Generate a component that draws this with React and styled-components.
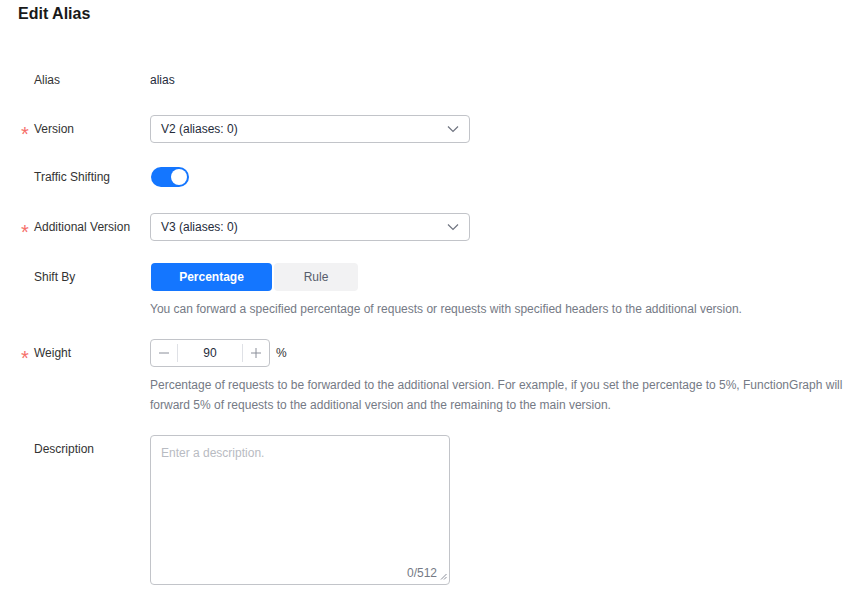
import React from "react";
import styled, { createGlobalStyle } from "styled-components";

const GlobalStyle = createGlobalStyle`
  html, body {
    margin: 0;
    padding: 0;
    background: #ffffff;
  }
  body {
    font-family: "Liberation Sans", Arial, sans-serif;
    font-size: 12px;
    color: #252b3a;
  }
`;

const Page = styled.div`
  padding: 2px 0 0 18px;
  width: 853px;
  box-sizing: border-box;
`;

const Title = styled.h1`
  margin: 0 0 40px 0;
  font-size: 16px;
  line-height: 24px;
  font-weight: 700;
  color: #191919;
`;

const Form = styled.div`
  display: flex;
  flex-direction: column;
`;

const Row = styled.div`
  display: flex;
  align-items: flex-start;
  margin-bottom: ${(p) => p.$gap ?? 20}px;
`;

const LabelCell = styled.div`
  width: 132px;
  flex-shrink: 0;
  display: flex;
  align-items: center;
  height: 28px;
  color: #333333;
  font-size: 12px;
`;

const StarSlot = styled.span`
  width: 16px;
  flex-shrink: 0;
  display: flex;
  align-items: center;
  padding-left: 3px;
  box-sizing: border-box;
`;

const Star = styled.span`
  color: #f66f6a;
  font-size: 20px;
  line-height: 1;
  transform: translateY(5px);
`;

const Control = styled.div`
  flex: 1;
  min-width: 0;
  display: flex;
  flex-direction: column;
`;

const Inline = styled.div`
  display: flex;
  align-items: center;
  height: ${(p) => p.$h ?? 28}px;
  gap: ${(p) => p.$gap ?? 0}px;
`;

const PlainValue = styled.span`
  line-height: 28px;
  color: #252b3a;
`;

const Select = styled.div`
  width: 320px;
  height: 28px;
  box-sizing: border-box;
  border: 1px solid #c2c4c9;
  border-radius: 4px;
  display: flex;
  align-items: center;
  justify-content: space-between;
  padding: 0 10px 0 10px;
  color: #252b3a;
  background: #fff;
`;

const Switch = styled.div`
  width: 38px;
  height: 20px;
  margin-left: 1px;
  border-radius: 10px;
  background: #1476ff;
  display: flex;
  align-items: center;
  justify-content: flex-end;
  padding: 0 2px;
  box-sizing: border-box;
`;

const Knob = styled.span`
  width: 16px;
  height: 16px;
  border-radius: 50%;
  background: #ffffff;
`;

const Segments = styled.div`
  display: flex;
  gap: 2px;
  margin-left: 1px;
`;

const Segment = styled.div`
  height: 28px;
  width: ${(p) => p.$w}px;
  border-radius: 4px;
  display: flex;
  align-items: center;
  justify-content: center;
  font-size: 12px;
  font-weight: ${(p) => (p.$active ? 700 : 400)};
  background: ${(p) => (p.$active ? "#1476ff" : "#f2f2f3")};
  color: ${(p) => (p.$active ? "#ffffff" : "#575d6c")};
`;

const Hint = styled.div`
  margin-top: ${(p) => p.$top ?? 7}px;
  max-width: 700px;
  line-height: 20px;
  font-size: 12px;
  color: #757a85;
`;

const Stepper = styled.div`
  width: 120px;
  height: 28px;
  box-sizing: border-box;
  border: 1px solid #c2c4c9;
  border-radius: 4px;
  display: flex;
  align-items: stretch;
`;

const StepButton = styled.div`
  width: 26px;
  display: flex;
  align-items: center;
  justify-content: center;
  color: #8a8e99;
`;

const StepDivider = styled.span`
  width: 1px;
  align-self: center;
  height: 18px;
  background: #dfe1e6;
`;

const StepValue = styled.div`
  flex: 1;
  display: flex;
  align-items: center;
  justify-content: center;
  color: #252b3a;
`;

const Unit = styled.span`
  color: #333333;
  margin-left: 6px;
  font-size: 12px;
`;

const TextArea = styled.div`
  width: 300px;
  height: 150px;
  box-sizing: border-box;
  border: 1px solid #c2c4c9;
  border-radius: 4px;
  padding: 8px 10px;
  display: flex;
  flex-direction: column;
  justify-content: space-between;
`;

const Placeholder = styled.span`
  color: #b8bbc2;
  line-height: 18px;
`;

const Counter = styled.div`
  display: flex;
  justify-content: flex-end;
  align-items: flex-end;
  gap: 3px;
  color: #757a85;
  line-height: 14px;
  margin-right: -8px;
  margin-bottom: -4px;
`;

const Chevron = () => (
  <svg width="12" height="8" viewBox="0 0 12 8" fill="none">
    <path d="M1 1.5L6 6.5L11 1.5" stroke="#6f7480" strokeWidth="1.2" />
  </svg>
);

const Minus = () => (
  <svg width="10" height="10" viewBox="0 0 10 10">
    <path d="M0 5H10" stroke="#8a8e99" strokeWidth="1" />
  </svg>
);

const Plus = () => (
  <svg width="10" height="10" viewBox="0 0 10 10">
    <path d="M0 5H10M5 0V10" stroke="#8a8e99" strokeWidth="1" />
  </svg>
);

const Grip = () => (
  <svg width="7" height="7" viewBox="0 0 7 7">
    <path d="M6.5 1L1 6.5M6.5 4L4 6.5" stroke="#8a8e99" strokeWidth="1" />
  </svg>
);

const Label = ({ required, children }) => (
  <LabelCell>
    <StarSlot>{required && <Star>*</Star>}</StarSlot>
    {children}
  </LabelCell>
);

export default function App() {
  return (
    <>
      <GlobalStyle />
      <Page>
        <Title>Edit Alias</Title>
        <Form>
          <Row $gap={21}>
            <Label>Alias</Label>
            <Control>
              <PlainValue>alias</PlainValue>
            </Control>
          </Row>

          <Row>
            <Label required>Version</Label>
            <Control>
              <Select>
                <span>V2 (aliases: 0)</span>
                <Chevron />
              </Select>
            </Control>
          </Row>

          <Row $gap={22}>
            <Label>Traffic Shifting</Label>
            <Control>
              <Inline>
                <Switch>
                  <Knob />
                </Switch>
              </Inline>
            </Control>
          </Row>

          <Row $gap={22}>
            <Label required>Additional Version</Label>
            <Control>
              <Select>
                <span>V3 (aliases: 0)</span>
                <Chevron />
              </Select>
            </Control>
          </Row>

          <Row $gap={20}>
            <Label>Shift By</Label>
            <Control>
              <Segments>
                <Segment $active $w={121}>Percentage</Segment>
                <Segment $w={84}>Rule</Segment>
              </Segments>
              <Hint $top={8}>
                You can forward a specified percentage of requests or requests with specified headers to the additional version.
              </Hint>
            </Control>
          </Row>

          <Row>
            <Label required>Weight</Label>
            <Control>
              <Inline>
                <Stepper>
                  <StepButton>
                    <Minus />
                  </StepButton>
                  <StepDivider />
                  <StepValue>90</StepValue>
                  <StepDivider />
                  <StepButton>
                    <Plus />
                  </StepButton>
                </Stepper>
                <Unit>%</Unit>
              </Inline>
              <Hint $top={8}>
                Percentage of requests to be forwarded to the additional version. For example, if you set the percentage to 5%, FunctionGraph will forward 5% of requests to the additional version and the remaining to the main version.
              </Hint>
            </Control>
          </Row>

          <Row>
            <Label>Description</Label>
            <Control>
              <TextArea>
                <Placeholder>Enter a description.</Placeholder>
                <Counter>
                  <span>0/512</span>
                  <Grip />
                </Counter>
              </TextArea>
            </Control>
          </Row>
        </Form>
      </Page>
    </>
  );
}
